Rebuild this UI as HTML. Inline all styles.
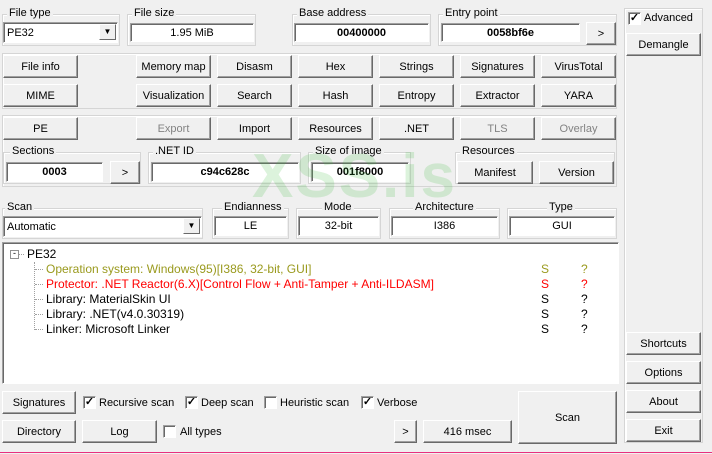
<!DOCTYPE html><html><head><style>
body{margin:0;width:712px;height:454px;background:#f0f0f0;position:relative;overflow:hidden;font-family:"Liberation Sans",sans-serif;font-size:11px;color:#000}
div{position:absolute;box-sizing:border-box}
.fr{border:1px solid #d5d5d5;box-shadow:inset 1px 1px 0 #fff}
.lb{background:#f0f0f0;padding:0 2px;line-height:13px;top:-8px}
.b{background:#f0f0f0;border:1px solid;border-color:#fff #696969 #696969 #fff;box-shadow:inset -1px -1px 0 #a0a0a0;text-align:center;display:flex;align-items:center;justify-content:center}
.d{color:#838383}
.e{background:#fff;border:1px solid;border-color:#a0a0a0 #fff #fff #a0a0a0;box-shadow:inset 1px 1px 0 #696969;text-align:center;display:flex;align-items:center;justify-content:center;font-weight:bold}
.n{font-weight:normal}
.cb{width:13px;height:13px;background:#fff;border:1px solid;border-color:#a0a0a0 #fff #fff #a0a0a0;box-shadow:inset 1px 1px 0 #696969;font-size:11px;line-height:11px;text-align:center;font-weight:bold}
.ar{width:17px;height:16px;right:1px;top:1px;background:#f0f0f0;border:1px solid;border-color:#fff #696969 #696969 #fff;font-size:8px;text-align:center;line-height:14px}
.t{white-space:nowrap;line-height:15px}
.tr .t{font-size:12px}
.h{width:8px;height:1px;border-top:1px dotted #a0a0a0;left:12px}
</style></head><body>
<div class="fr" style="left:2px;top:14px;width:118px;height:32px"><div class="lb" style="left:4px">File type</div></div>
<div class="e n" style="left:3px;top:22px;width:115px;height:21px;justify-content:flex-start;padding-left:3px">PE32<div class="ar">▼</div></div>
<div class="fr" style="left:127px;top:14px;width:129px;height:32px"><div class="lb" style="left:4px">File size</div></div>
<div class="e n" style="left:130px;top:23px;width:124px;height:19px">1.95 MiB</div>
<div class="fr" style="left:292px;top:14px;width:139px;height:32px"><div class="lb" style="left:4px">Base address</div></div>
<div class="e" style="left:294px;top:23px;width:135px;height:19px">00400000</div>
<div class="fr" style="left:438px;top:14px;width:179px;height:32px"><div class="lb" style="left:4px">Entry point</div></div>
<div class="e" style="left:441px;top:23px;width:139px;height:19px">0058bf6e</div>
<div class="b" style="left:586px;top:22px;width:30px;height:23px">&gt;</div>
<div class="fr" style="left:624px;top:8px;width:79px;height:435px"></div>
<div class="cb" style="left:628px;top:12px">✓</div><div class="t" style="left:644px;top:11px">Advanced</div>
<div class="b" style="left:626px;top:33px;width:75px;height:23px">Demangle</div>
<div class="fr" style="left:2px;top:53px;width:615px;height:56px"></div>
<div class="b" style="left:3px;top:55px;width:75px;height:23px">File info</div>
<div class="b" style="left:136px;top:55px;width:75px;height:23px">Memory map</div>
<div class="b" style="left:217px;top:55px;width:75px;height:23px">Disasm</div>
<div class="b" style="left:298px;top:55px;width:75px;height:23px">Hex</div>
<div class="b" style="left:379px;top:55px;width:75px;height:23px">Strings</div>
<div class="b" style="left:460px;top:55px;width:75px;height:23px">Signatures</div>
<div class="b" style="left:541px;top:55px;width:75px;height:23px">VirusTotal</div>
<div class="b" style="left:3px;top:84px;width:75px;height:23px">MIME</div>
<div class="b" style="left:136px;top:84px;width:75px;height:23px">Visualization</div>
<div class="b" style="left:217px;top:84px;width:75px;height:23px">Search</div>
<div class="b" style="left:298px;top:84px;width:75px;height:23px">Hash</div>
<div class="b" style="left:379px;top:84px;width:75px;height:23px">Entropy</div>
<div class="b" style="left:460px;top:84px;width:75px;height:23px">Extractor</div>
<div class="b" style="left:541px;top:84px;width:75px;height:23px">YARA</div>
<div class="fr" style="left:2px;top:115px;width:615px;height:72px"></div>
<div class="b" style="left:3px;top:117px;width:75px;height:23px">PE</div>
<div class="b d" style="left:136px;top:117px;width:75px;height:23px">Export</div>
<div class="b" style="left:217px;top:117px;width:75px;height:23px">Import</div>
<div class="b" style="left:298px;top:117px;width:75px;height:23px">Resources</div>
<div class="b" style="left:379px;top:117px;width:75px;height:23px">.NET</div>
<div class="b d" style="left:460px;top:117px;width:75px;height:23px">TLS</div>
<div class="b d" style="left:541px;top:117px;width:75px;height:23px">Overlay</div>
<div class="fr" style="left:3px;top:152px;width:138px;height:32px"><div class="lb" style="left:6px">Sections</div></div>
<div class="e" style="left:6px;top:162px;width:97px;height:20px">0003</div>
<div class="b" style="left:110px;top:161px;width:30px;height:23px">&gt;</div>
<div class="fr" style="left:148px;top:152px;width:153px;height:32px"><div class="lb" style="left:4px">.NET ID</div></div>
<div class="e" style="left:151px;top:162px;width:148px;height:20px">c94c628c</div>
<div class="fr" style="left:308px;top:152px;width:103px;height:32px"><div class="lb" style="left:4px">Size of image</div></div>
<div class="e" style="left:311px;top:162px;width:98px;height:20px">001f8000</div>
<div class="fr" style="left:455px;top:152px;width:160px;height:32px"><div class="lb" style="left:4px">Resources</div></div>
<div class="b" style="left:457px;top:161px;width:76px;height:23px">Manifest</div>
<div class="b" style="left:539px;top:161px;width:75px;height:23px">Version</div>
<div style="left:252px;top:142px;font-size:62px;font-weight:bold;color:rgba(60,190,60,0.18);letter-spacing:2px;line-height:70px">XSS.is</div>
<div class="fr" style="left:2px;top:208px;width:201px;height:31px"><div class="lb" style="left:2px">Scan</div></div>
<div class="e n" style="left:3px;top:216px;width:199px;height:21px;justify-content:flex-start;padding-left:3px">Automatic<div class="ar">▼</div></div>
<div class="fr" style="left:212px;top:208px;width:77px;height:31px"><div class="lb" style="left:9px">Endianness</div></div>
<div class="e n" style="left:214px;top:216px;width:73px;height:20px">LE</div>
<div class="fr" style="left:296px;top:208px;width:85px;height:31px"><div class="lb" style="left:25px">Mode</div></div>
<div class="e n" style="left:298px;top:216px;width:81px;height:20px">32-bit</div>
<div class="fr" style="left:389px;top:208px;width:111px;height:31px"><div class="lb" style="left:23px">Architecture</div></div>
<div class="e n" style="left:391px;top:216px;width:107px;height:20px">I386</div>
<div class="fr" style="left:507px;top:208px;width:110px;height:31px"><div class="lb" style="left:39px">Type</div></div>
<div class="e n" style="left:509px;top:216px;width:106px;height:20px">GUI</div>
<div class="tr" style="left:2px;top:242px;width:617px;height:142px;background:#fff;border:1px solid;border-color:#a0a0a0 #fff #fff #a0a0a0;box-shadow:inset 1px 1px 0 #696969">
<div style="left:7px;top:7px;width:9px;height:9px;border:1px solid #919191;font-size:9px;line-height:5px;text-align:center">-</div>
<div style="left:16px;top:11px;width:5px;height:1px;border-top:1px dotted #a0a0a0"></div>
<div style="left:31px;top:19px;width:1px;height:68px;border-left:1px dotted #a0a0a0"></div>
<div class="h" style="left:32px;top:26px"></div><div class="h" style="left:32px;top:41px"></div><div class="h" style="left:32px;top:56px"></div><div class="h" style="left:32px;top:71px"></div><div class="h" style="left:32px;top:86px"></div>
<div class="t" style="left:24px;top:4px">PE32</div>
<div class="t" style="left:43px;top:19px;color:#9a9a1e">Operation system: Windows(95)[I386, 32-bit, GUI]</div>
<div class="t" style="left:43px;top:34px;color:#f00">Protector: .NET Reactor(6.X)[Control Flow + Anti-Tamper + Anti-ILDASM]</div>
<div class="t" style="left:43px;top:49px">Library: MaterialSkin UI</div>
<div class="t" style="left:43px;top:64px">Library: .NET(v4.0.30319)</div>
<div class="t" style="left:43px;top:79px">Linker: Microsoft Linker</div>
<div class="t" style="left:538px;top:19px;color:#9a9a1e">S</div><div class="t" style="left:578px;top:19px;color:#9a9a1e">?</div>
<div class="t" style="left:538px;top:34px;color:#f00">S</div><div class="t" style="left:578px;top:34px;color:#f00">?</div>
<div class="t" style="left:538px;top:49px">S</div><div class="t" style="left:578px;top:49px">?</div>
<div class="t" style="left:538px;top:64px">S</div><div class="t" style="left:578px;top:64px">?</div>
<div class="t" style="left:538px;top:79px">S</div><div class="t" style="left:578px;top:79px">?</div>
</div>
<div class="b" style="left:2px;top:391px;width:74px;height:23px">Signatures</div>
<div class="cb" style="left:83px;top:396px">✓</div><div class="t" style="left:99px;top:396px">Recursive scan</div>
<div class="cb" style="left:185px;top:396px">✓</div><div class="t" style="left:201px;top:396px">Deep scan</div>
<div class="cb" style="left:264px;top:396px"></div><div class="t" style="left:280px;top:396px">Heuristic scan</div>
<div class="cb" style="left:361px;top:396px">✓</div><div class="t" style="left:377px;top:396px">Verbose</div>
<div class="b" style="left:2px;top:420px;width:74px;height:23px">Directory</div>
<div class="b" style="left:82px;top:420px;width:75px;height:23px">Log</div>
<div class="cb" style="left:163px;top:425px"></div><div class="t" style="left:180px;top:425px">All types</div>
<div class="b" style="left:394px;top:420px;width:23px;height:23px">&gt;</div>
<div class="b" style="left:423px;top:420px;width:89px;height:23px">416 msec</div>
<div class="b" style="left:518px;top:391px;width:99px;height:53px">Scan</div>
<div class="b" style="left:626px;top:332px;width:75px;height:23px">Shortcuts</div>
<div class="b" style="left:626px;top:361px;width:75px;height:23px">Options</div>
<div class="b" style="left:626px;top:390px;width:75px;height:23px">About</div>
<div class="b" style="left:626px;top:419px;width:75px;height:23px">Exit</div>
<div style="left:0;top:452px;width:712px;height:1px;background:#e8307e"></div>
</body></html>
